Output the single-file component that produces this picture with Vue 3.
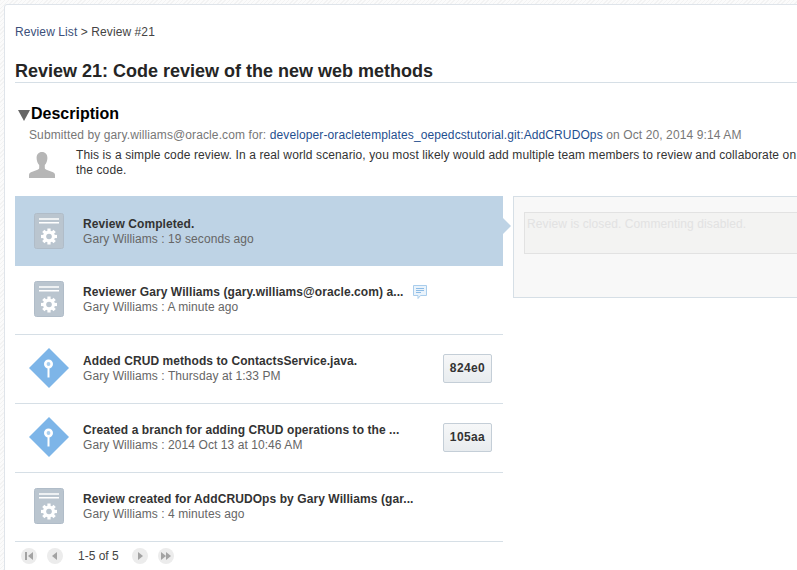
<template>
  <div class="page">
    <div class="panel">
      <div class="crumbs"><a class="link">Review List</a> &gt; Review #21</div>
      <h1 class="title">Review 21: Code review of the new web methods</h1>

      <div class="desc-head">
        <span class="caret"></span>
        <h2>Description</h2>
      </div>
      <div class="submitted">
        Submitted by gary.williams@oracle.com for:
        <a class="repo">developer-oracletemplates_oepedcstutorial.git:AddCRUDOps</a>
        on Oct 20, 2014 9:14 AM
      </div>
      <div class="desc-body">
        <svg class="avatar" viewBox="0 0 26 26" width="26" height="26">
          <path d="M13 0c3.400 0 5.400 2.500 5.400 6 0 2.900-1.100 5.600-2.600 7v2.800c0 1 .5 1.500 1.600 2l5.300 2c2 .8 3.300 1.500 3.300 3.200v3H0v-3c0-1.700 1.300-2.400 3.300-3.200l5.300-2c1.100-.5 1.600-1 1.600-2V13c-1.500-1.400-2.600-4.100-2.600-7 0-3.500 2-6 5.400-6z" fill="#b6b6b6"/>
        </svg>
        <p>This is a simple code review. In a real world scenario, you most likely would add multiple team members to review and collaborate on the code.</p>
      </div>

      <div class="split">
        <div class="list">
          <div v-for="(row, i) in rows" :key="i" class="row" :class="{ selected: i === 0 }">
            <div class="icon">
              <svg v-if="row.kind === 'doc'" viewBox="0 0 30 36" width="30" height="36">
                <rect x="0.500" y="0.500" width="29" height="35" rx="2" fill="#bac5cf" stroke="#b0bcc8"/>
                <path d="M5 6h20M5 9.800h20" stroke="#fff" stroke-width="1.500" fill="none"/>
                <g transform="translate(15 23.500)" fill="#fff">
                  <circle r="6"/>
                  <rect v-for="a in [0, 45, 90, 135]" :key="a" x="-1.600" y="-8" width="3.200" height="16" :transform="`rotate(${a})`"/>
                </g>
                <circle cx="15" cy="23.500" r="2.800" fill="#bac5cf"/>
              </svg>
              <svg v-else viewBox="0 0 40 40" width="40" height="40">
                <path d="M20 0l20 20-20 20L0 20z" fill="#7db5e8"/>
                <path d="M19.500 17v12.500" stroke="#fff" stroke-width="2" fill="none"/>
                <circle cx="19.500" cy="16" r="3.200" fill="#a9cff0" stroke="#fff" stroke-width="2.600"/>
              </svg>
            </div>
            <div class="text">
              <div class="row-title">{{ row.title }}</div>
              <div class="row-sub">{{ row.sub }}</div>
            </div>
            <svg v-if="row.comment" class="bubble" viewBox="0 0 14 15" width="14" height="15">
              <path d="M.5.500h13v10H7.500l-2.500 3v-3H.5z" fill="#eaf3fb" stroke="#a9cdec"/>
              <path d="M3 3.500h8M3 5.500h8M3 7.500h5" stroke="#8dbce6" fill="none"/>
            </svg>
            <button v-if="row.hash" class="hash">{{ row.hash }}</button>
          </div>
          <div class="pager">
            <span class="pg"><svg viewBox="0 0 16 16" width="16" height="16"><path d="M4 4h2v8H4zM12 4v8L7 8z" fill="#a3a3a3"/></svg></span>
            <span class="pg"><svg viewBox="0 0 16 16" width="16" height="16"><path d="M10 4v8L5 8z" fill="#a3a3a3"/></svg></span>
            <span class="count">1-5 of 5</span>
            <span class="pg"><svg viewBox="0 0 16 16" width="16" height="16"><path d="M6 4v8l5-4z" fill="#a3a3a3"/></svg></span>
            <span class="pg"><svg viewBox="0 0 16 16" width="16" height="16"><path d="M3 4v8l5-4zM8 4v8l5-4z" fill="#a3a3a3"/></svg></span>
          </div>
        </div>
        <div class="comments">
          <div class="closed">Review is closed. Commenting disabled.</div>
        </div>
      </div>
    </div>
  </div>
</template>

<script setup>
const rows = [
  { kind: 'doc', title: 'Review Completed.', sub: 'Gary Williams : 19 seconds ago' },
  { kind: 'doc', title: 'Reviewer Gary Williams (gary.williams@oracle.com) a...', sub: 'Gary Williams : A minute ago', comment: true },
  { kind: 'commit', title: 'Added CRUD methods to ContactsService.java.', sub: 'Gary Williams : Thursday at 1:33 PM', hash: '824e0' },
  { kind: 'commit', title: 'Created a branch for adding CRUD operations to the ...', sub: 'Gary Williams : 2014 Oct 13 at 10:46 AM', hash: '105aa' },
  { kind: 'doc', title: 'Review created for AddCRUDOps by Gary Williams (gar...', sub: 'Gary Williams : 4 minutes ago' }
]
</script>

<style>
html, body {
  margin: 0;
  overflow: hidden;
}
body {
  background: repeating-linear-gradient(135deg, #f3f3f3 0 1px, #fbfbfb 1px 3px);
}
</style>

<style scoped>
.page {
  width: 797px;
  height: 570px;
  overflow: hidden;
  padding: 4px 0 0 4px;
  box-sizing: border-box;
  font-family: "Liberation Sans", Arial, sans-serif;
  font-size: 12px;
  color: #333;
}

.panel {
  width: 860px;
  height: 600px;
  background: #fff;
  border: 1px solid #dfe4ea;
  border-radius: 3px;
  padding: 20px 0 0 10px;
  box-sizing: border-box;
}

.crumbs {
  line-height: 15px;
  color: #444;
  letter-spacing: 0.09px;
}

.link {
  color: #3c4f7a;
}

.title {
  margin: 21px 0 0;
  font-size: 18px;
  line-height: 20px;
  padding-bottom: 1px;
  font-weight: bold;
  color: #252525;
  border-bottom: 1px solid #d6dfe6;
}

.desc-head {
  display: flex;
  align-items: center;
  margin-top: 20px;
  height: 22px;
}

.caret {
  width: 0;
  height: 0;
  margin: 3px 1px 0 3px;
  border-left: 6px solid transparent;
  border-right: 6px solid transparent;
  border-top: 11px solid #666;
}

.desc-head h2 {
  margin: 0;
  font-size: 16px;
  font-weight: bold;
  color: #000;
}

.submitted {
  margin: 3px 0 0 14px;
  line-height: 15px;
  color: #777;
  white-space: nowrap;
  letter-spacing: 0.11px;
}

.repo {
  color: #1f4f8f;
}

.desc-body {
  display: flex;
  margin: 5px 0 0 14px;
  width: 790px;
}

.avatar {
  flex: none;
  margin-top: 4px;
}

.desc-body p {
  margin: 0 0 0 21px;
  line-height: 15px;
  width: 725px;
  color: #333;
  letter-spacing: 0.115px;
}

.split {
  display: flex;
  align-items: flex-start;
  margin-top: 18px;
}

.list {
  width: 488px;
}

.row {
  display: flex;
  align-items: center;
  height: 68px;
  box-sizing: content-box;
  border-bottom: 1px solid #d6dfe6;
  position: relative;
}

.row:not(.selected) {
  height: 66px;
  padding-bottom: 2px;
}

.row.selected {
  height: 69px;
  background: #bed3e5;
  border-bottom-color: #bed3e5;
}

.row.selected::after {
  content: "";
  position: absolute;
  left: 100%;
  top: 22px;
  border-top: 8px solid transparent;
  border-bottom: 8px solid transparent;
  border-left: 8px solid #bed3e5;
}

.icon {
  flex: none;
  width: 40px;
  height: 40px;
  margin-left: 14px;
  display: flex;
  align-items: center;
  justify-content: center;
}

.text {
  margin-left: 14px;
  padding-top: 2px;
  flex: 1;
  min-width: 0;
}

.row-title {
  font-weight: bold;
  line-height: 15px;
  color: #333;
  white-space: nowrap;
  letter-spacing: 0.08px;
}

.row-sub {
  line-height: 15px;
  color: #666;
  letter-spacing: 0.07px;
}

.bubble {
  position: absolute;
  left: 398px;
  top: 19px;
}

.hash {
  flex: none;
  width: 49px;
  height: 29px;
  margin-right: 11px;
  padding: 0;
  border: 1px solid #c4ced7;
  border-radius: 2px;
  background: linear-gradient(#f6f7f8, #e8ecef);
  font-family: "Liberation Sans", Arial, sans-serif;
  font-size: 12px;
  font-weight: bold;
  letter-spacing: 0.4px;
  color: #333;
}

.pager {
  display: flex;
  align-items: center;
  height: 27px;
  padding-left: 6px;
}

.pg {
  width: 16px;
  height: 16px;
  border-radius: 50%;
  background: #ececec;
  display: flex;
  margin-right: 10px;
}

.count {
  width: 40px;
  margin: 0 14px 0 5px;
  white-space: nowrap;
  color: #444;
}

.comments {
  margin-left: 10px;
  width: 320px;
  height: 102px;
  box-sizing: border-box;
  padding: 15px 10px;
  background: #f8f8f8;
  border: 1px solid #d6dfe6;
}

.closed {
  height: 42px;
  box-sizing: border-box;
  padding: 3px 2px;
  background: #f3f3f2;
  border: 1px solid #e2e2e2;
  color: #e2e2e2;
  line-height: 16px;
  letter-spacing: 0.1px;
}
</style>
